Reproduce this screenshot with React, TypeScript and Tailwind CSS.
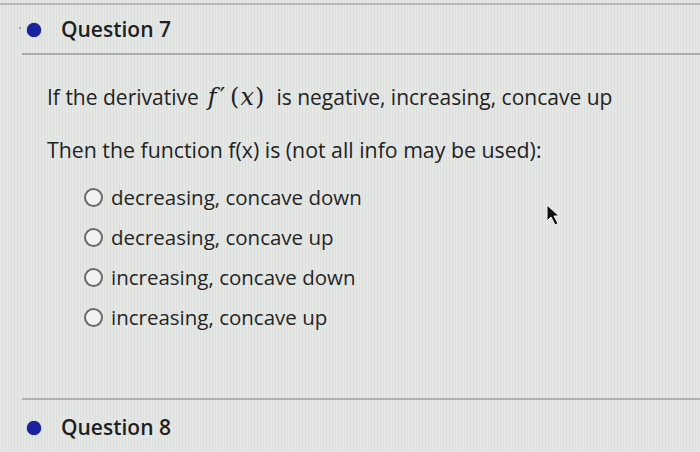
import React from "react";

const options = [
  "decreasing, concave down",
  "decreasing, concave up",
  "increasing, concave down",
  "increasing, concave up",
];

function QuestionHeader({ label }: { label: string }) {
  return (
    <div className="flex items-center">
      <div className="ml-[27px] h-[14px] w-[14px] rounded-full bg-[#1a22a0] shadow-[0_0_1px_#0a0f50]" />
      <span className="ml-[20px] text-[21px] font-semibold text-[#1e1f20]">{label}</span>
    </div>
  );
}

function Radio({ text }: { text: string }) {
  return (
    <div className="flex h-[40px] items-center">
      <div className="h-[19px] w-[19px] rounded-full border-[2px] border-[#686c6a] bg-[#f1f2f1]" />
      <span className="ml-[8px] text-[20.5px] font-medium text-[#242525]">{text}</span>
    </div>
  );
}

// f'(x) rendered roughly the way MathJax lays it out
function FPrime() {
  return (
    <span className="ml-[9px] mr-[12px] font-['DejaVu_Serif',serif] text-[24px] leading-none">
      <span className="italic">f</span>
      <span className="ml-[3px]">′</span>
      <span className="ml-[5px]">(</span>
      <span className="ml-[1px] italic">x</span>
      <span className="ml-[1px]">)</span>
    </span>
  );
}

export default function App() {
  return (
    <div className="relative h-[452px] w-[700px] overflow-hidden bg-[#e2e4e2] bg-[repeating-linear-gradient(90deg,#e5e7e5_0px,#e5e7e5_2px,#dcdfdd_2px,#dcdfdd_3px)] font-['Open_Sans',sans-serif]">
      <div className="mt-[3px] h-[2px] w-full bg-[#b6b9b7]" />
      <div className="relative h-[48px] pt-[2px]">
        <div className="absolute left-[19px] top-[22px] h-[2px] w-[2px] rounded-full bg-[#8a8c8b]" />
        <div className="flex h-full items-center">
          <QuestionHeader label="Question 7" />
        </div>
      </div>
      <div className="ml-[22px] h-[2px] bg-[#a9acaa]" />

      <div className="pl-[47px]">
        <p className="mt-[27px] text-[21px] font-medium leading-[30px] text-[#222323]">
          If the derivative<FPrime />is negative, increasing, concave up
        </p>
        <p className="mt-[23px] text-[21.3px] font-medium leading-[30px] text-[#222323]">
          Then the function f(x) is (not all info may be used):
        </p>
        <div className="ml-[37px] mt-[12px] flex flex-col">
          {options.map((o) => (
            <Radio key={o} text={o} />
          ))}
        </div>
      </div>

      <div className="ml-[22px] mt-[61px] h-[2px] bg-[#b0b2b0]" />
      <div className="mt-[12px]">
        <QuestionHeader label="Question 8" />
      </div>

      <svg
        className="absolute left-[544px] top-[203px]"
        width="18"
        height="24"
        viewBox="0 0 18 24"
      >
        <path d="M3 2 L3 18 L7 14 L11 22 L14 20.5 L10 13 L15 13 Z" fill="#111111" stroke="#f4f4f4" strokeWidth="1" />
      </svg>
    </div>
  );
}
